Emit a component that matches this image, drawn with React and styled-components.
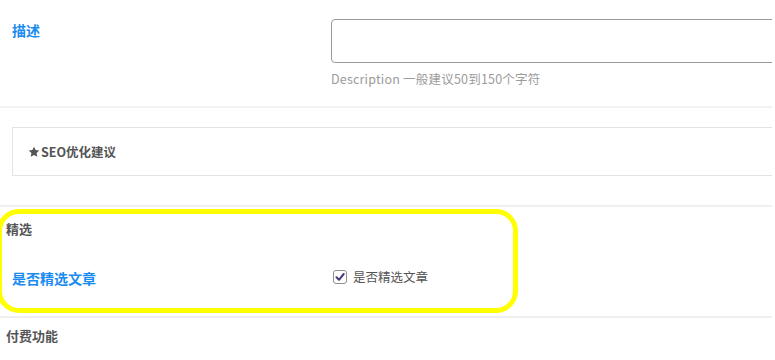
import React from "react";
import styled, { createGlobalStyle } from "styled-components";

const Global = createGlobalStyle`
  html, body { margin: 0; padding: 0; background: #fff; }
  body { font-family: "Noto Sans CJK SC", "Noto Sans", sans-serif; }
`;

const Page = styled.div`
  width: 772px;
  height: 360px;
  overflow: hidden;
  position: relative;
  background: #fff;
`;

const FieldRow = styled.div`
  display: flex;
  align-items: flex-start;
  padding: ${(p) => p.$pad || "19px 0 18px"};
  border-bottom: ${(p) => (p.$divider ? "2px solid #f2f2f2" : "none")};
`;

const Label = styled.div`
  width: 331px;
  flex: none;
  padding-left: 12px;
  box-sizing: border-box;
  font-size: 14px;
  line-height: 20px;
  font-weight: 700;
  color: #1a8cf0;
  margin-top: ${(p) => p.$top || 0}px;
`;

const Field = styled.div`
  flex: 1;
  min-width: 0;
  display: flex;
  flex-direction: column;
`;

const TextInput = styled.div`
  width: calc(100% + 20px);
  height: 44px;
  box-sizing: border-box;
  border: 1px solid #9a9a9a;
  border-radius: 4px;
  background: #fff;
`;

const Help = styled.div`
  margin-top: 7px;
  font-size: 12.5px;
  line-height: 18px;
  color: #9b9b9b;
  letter-spacing: 0.2px;
`;

const SeoWrap = styled.div`
  padding: 19px 0 29px 12px;
  border-bottom: 2px solid #f0f0f0;
`;

const SeoBox = styled.div`
  height: 49px;
  box-sizing: border-box;
  width: calc(100% + 20px);
  border: 1px solid #e4e4e4;
  display: flex;
  align-items: center;
  padding-left: 15px;
  font-size: 12.5px;
  font-weight: 700;
  color: #555;
  gap: 1px;
`;

const Section = styled.div`
  position: relative;
  border-bottom: ${(p) => (p.$divider ? "2px solid #efefef" : "none")};
`;

const SectionTitle = styled.div`
  padding: ${(p) => p.$top || 13}px 0 0 6px;
  font-size: 13px;
  line-height: 18px;
  font-weight: 700;
  color: #555;
`;

const CheckLabel = styled.label`
  display: flex;
  align-items: center;
  gap: 6px;
  padding-left: 2px;
  font-size: 12.5px;
  line-height: 18px;
  color: #555;
`;

const Box = styled.span`
  width: 14px;
  height: 14px;
  box-sizing: border-box;
  border: 1px solid #8f8f8f;
  border-radius: 3px;
  display: inline-flex;
  align-items: center;
  justify-content: center;
  background: #fff;
`;

const Highlight = styled.div`
  position: absolute;
  left: -3px;
  top: 2px;
  width: 521px;
  height: 104px;
  box-sizing: border-box;
  border: 5px solid #ffff00;
  border-radius: 22px;
  pointer-events: none;
`;

const Star = () => (
  <svg width="12" height="12" viewBox="0 0 24 24">
    <path
      d="M12 1.5l3.2 6.6 7.3.9-5.3 5 1.3 7.3L12 17.8l-6.5 3.5 1.3-7.3-5.3-5 7.3-.9z"
      fill="#555"
    />
  </svg>
);

export default function App() {
  return (
    <>
      <Global />
      <Page>
        <FieldRow $divider>
          <Label $top={1}>描述</Label>
          <Field>
            <TextInput />
            <Help>Description 一般建议50到150个字符</Help>
          </Field>
        </FieldRow>

        <SeoWrap>
          <SeoBox>
            <Star />
            <span>SEO优化建议</span>
          </SeoBox>
        </SeoWrap>

        <Section $divider>
          <Highlight />
          <SectionTitle>精选</SectionTitle>
          <FieldRow $pad="30px 0 28px">
            <Label $top={0}>是否精选文章</Label>
            <Field>
              <CheckLabel>
                <Box>
                  <svg width="10" height="10" viewBox="0 0 10 10">
                    <path
                      d="M1.5 5.2 L4 7.8 L8.7 2"
                      fill="none"
                      stroke="#4a3a78"
                      strokeWidth="2"
                      strokeLinecap="round"
                      strokeLinejoin="round"
                    />
                  </svg>
                </Box>
                是否精选文章
              </CheckLabel>
            </Field>
          </FieldRow>
        </Section>

        <Section>
          <SectionTitle $top={9}>付费功能</SectionTitle>
        </Section>
      </Page>
    </>
  );
}
